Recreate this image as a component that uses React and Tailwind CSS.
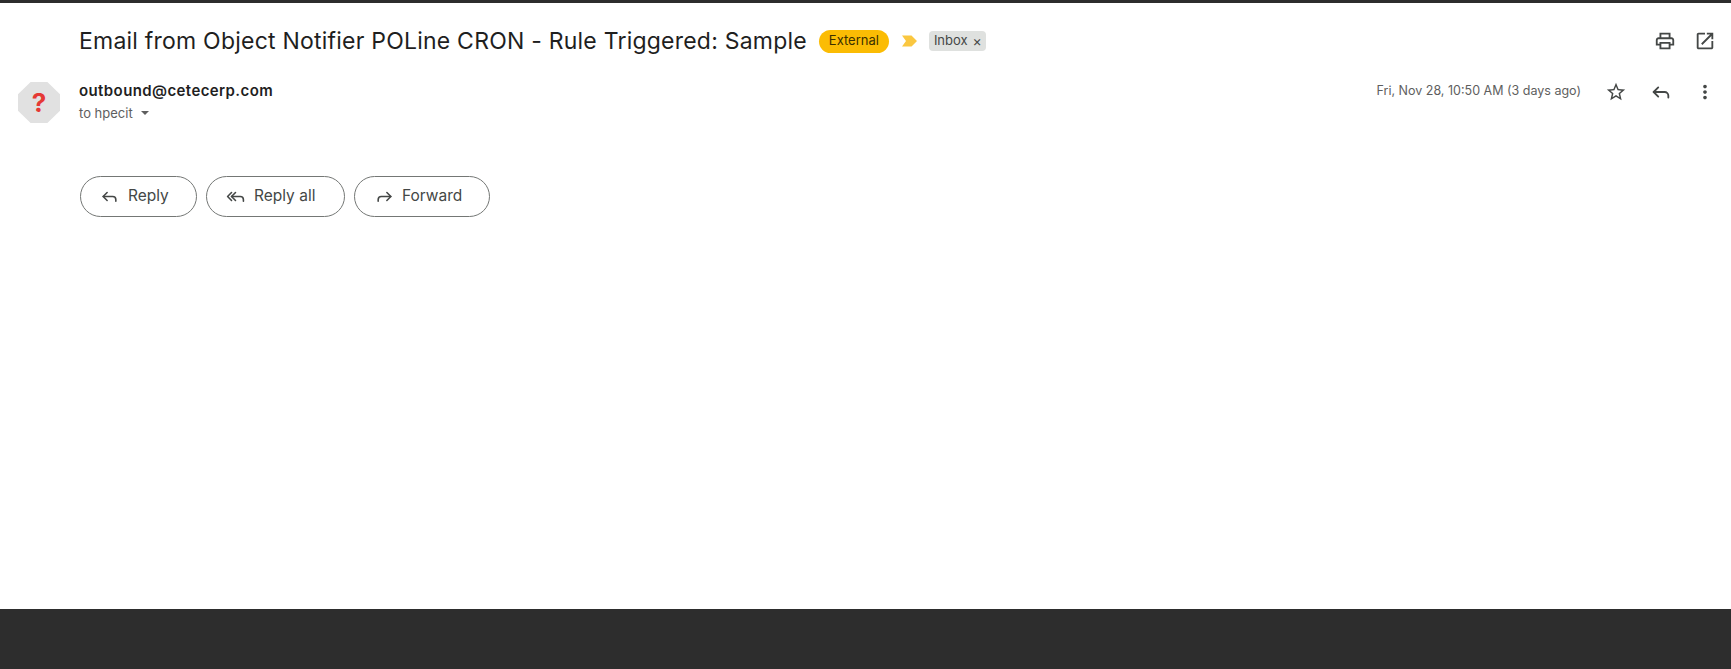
import { Reply, ReplyAll, Forward } from "lucide-react";

const Icon = ({ d, size = 22, className = "" }) => (
  <svg className={className} width={size} height={size} viewBox="0 0 24 24" fill="currentColor">
    <path d={d} />
  </svg>
);

const printPath =
  "M19 8h-1V3H6v5H5c-1.66 0-3 1.34-3 3v6h4v4h12v-4h4v-6c0-1.66-1.34-3-3-3zM8 5h8v3H8V5zm8 14H8v-4h8v4zm4-4h-2v-2H6v2H4v-4c0-.55.45-1 1-1h14c.55 0 1 .45 1 1v4z";
const openPath =
  "M19 19H5V5h7V3H5c-1.11 0-2 .9-2 2v14c0 1.1.89 2 2 2h14c1.1 0 2-.9 2-2v-7h-2v7zM14 3v2h3.59l-9.83 9.83 1.41 1.41L19 6.41V10h2V3h-7z";
const starPath =
  "M22 9.24l-7.19-.62L12 2 9.19 8.63 2 9.24l5.46 4.73L5.82 21 12 17.27 18.18 21l-1.63-7.03L22 9.24zM12 15.4l-3.76 2.27 1-4.28-3.32-2.88 4.38-.38L12 6.1l1.71 4.04 4.38.38-3.32 2.88 1 4.28L12 15.4z";
const dotsPath =
  "M12 8c1.1 0 2-.9 2-2s-.9-2-2-2-2 .9-2 2 .9 2 2 2zm0 2c-1.1 0-2 .9-2 2s.9 2 2 2 2-.9 2-2-.9-2-2-2zm0 6c-1.1 0-2 .9-2 2s.9 2 2 2 2-.9 2-2-.9-2-2-2z";

const ActionButton = ({ icon, label, className }) => (
  <button
    className={`flex items-center h-[41px] pb-[1px] rounded-full border border-[#747775] text-[#444746] text-[15.5px] ${className}`}
  >
    {icon}
    {label}
  </button>
);

const App = () => {
  return (
    <div className="flex flex-col h-[669px] bg-white font-['Inter',sans-serif]">
      <div className="h-[3px] bg-[#2d2d2d]" />

      <div className="flex-1 flex flex-col">
        {/* subject */}
        <div className="flex items-center h-[36px] mt-[20px] pl-[79px] pr-[15px]">
          <h1 className="text-[23px] leading-[28px] text-[#1f1f1f] tracking-[0.22px] whitespace-nowrap">
            Email from Object Notifier POLine CRON - Rule Triggered: Sample
          </h1>
          <span className="ml-[12px] flex items-center justify-center w-[70px] h-[23px] rounded-full bg-[#fbbc04] text-[#3c3000] text-[13px]">
            External
          </span>
          <svg className="ml-[13px]" width="15" height="12" viewBox="0 0 15 12">
            <path d="M0 0.5H9.5L15 6L9.5 11.5H0L4 6Z" fill="#fac740" />
          </svg>
          <span className="ml-[12px] flex items-center w-[57px] h-[20px] pl-[5px] rounded-[4px] bg-[#dfe1df] text-[#444746] text-[13px]">
            Inbox
            <span className="ml-[5px] text-[14px] leading-none">×</span>
          </span>
          <div className="ml-auto flex items-center gap-[18px] text-[#444746]">
            <Icon d={printPath} />
            <Icon d={openPath} />
          </div>
        </div>

        {/* sender row */}
        <div className="flex mt-[22px] pl-[18px] pr-[15px]">
          <div className="w-[42px] h-[41px] mt-[1px] flex items-center justify-center bg-[#e1e1e1] [clip-path:polygon(30%_0,70%_0,100%_30%,100%_70%,70%_100%,30%_100%,0_70%,0_30%)] text-[#e53935] text-[26px] font-bold">
            ?
          </div>
          <div className="ml-[19px]">
            <div className="text-[15px] leading-[20px] font-semibold text-[#1f1f1f] tracking-[0.4px]">
              outbound@cetecerp.com
            </div>
            <div className="flex items-center mt-[2px] text-[13px] leading-[20px] text-[#5e5e5e]">
              to hpecit
              <span className="ml-[8px] w-0 h-0 border-x-[4px] border-x-transparent border-t-[4px] border-t-[#5e5e5e]" />
            </div>
          </div>
          <div className="ml-auto flex items-start text-[#444746]">
            <span className="text-[12.5px] leading-[20px] text-[#5e5e5e]">
              Fri, Nov 28, 10:50 AM (3 days ago)
            </span>
            <Icon className="ml-[24px]" d={starPath} />
            <Reply className="ml-[23px]" size={22} strokeWidth={2} />
            <Icon className="ml-[22px]" d={dotsPath} />
          </div>
        </div>

        {/* actions */}
        <div className="flex gap-[9px] mt-[53px] pl-[80px]">
          <ActionButton
            className="w-[117px] pl-[19px]"
            icon={<Reply className="mr-[9px]" size={19} strokeWidth={2} />}
            label="Reply"
          />
          <ActionButton
            className="w-[139px] pl-[19px]"
            icon={<ReplyAll className="mr-[9px]" size={19} strokeWidth={2} />}
            label="Reply all"
          />
          <ActionButton
            className="w-[136px] pl-[20px]"
            icon={<Forward className="mr-[8px]" size={19} strokeWidth={2} />}
            label="Forward"
          />
        </div>
      </div>

      <div className="h-[60px] bg-[#2d2d2d]" />
    </div>
  );
};

export default App;
